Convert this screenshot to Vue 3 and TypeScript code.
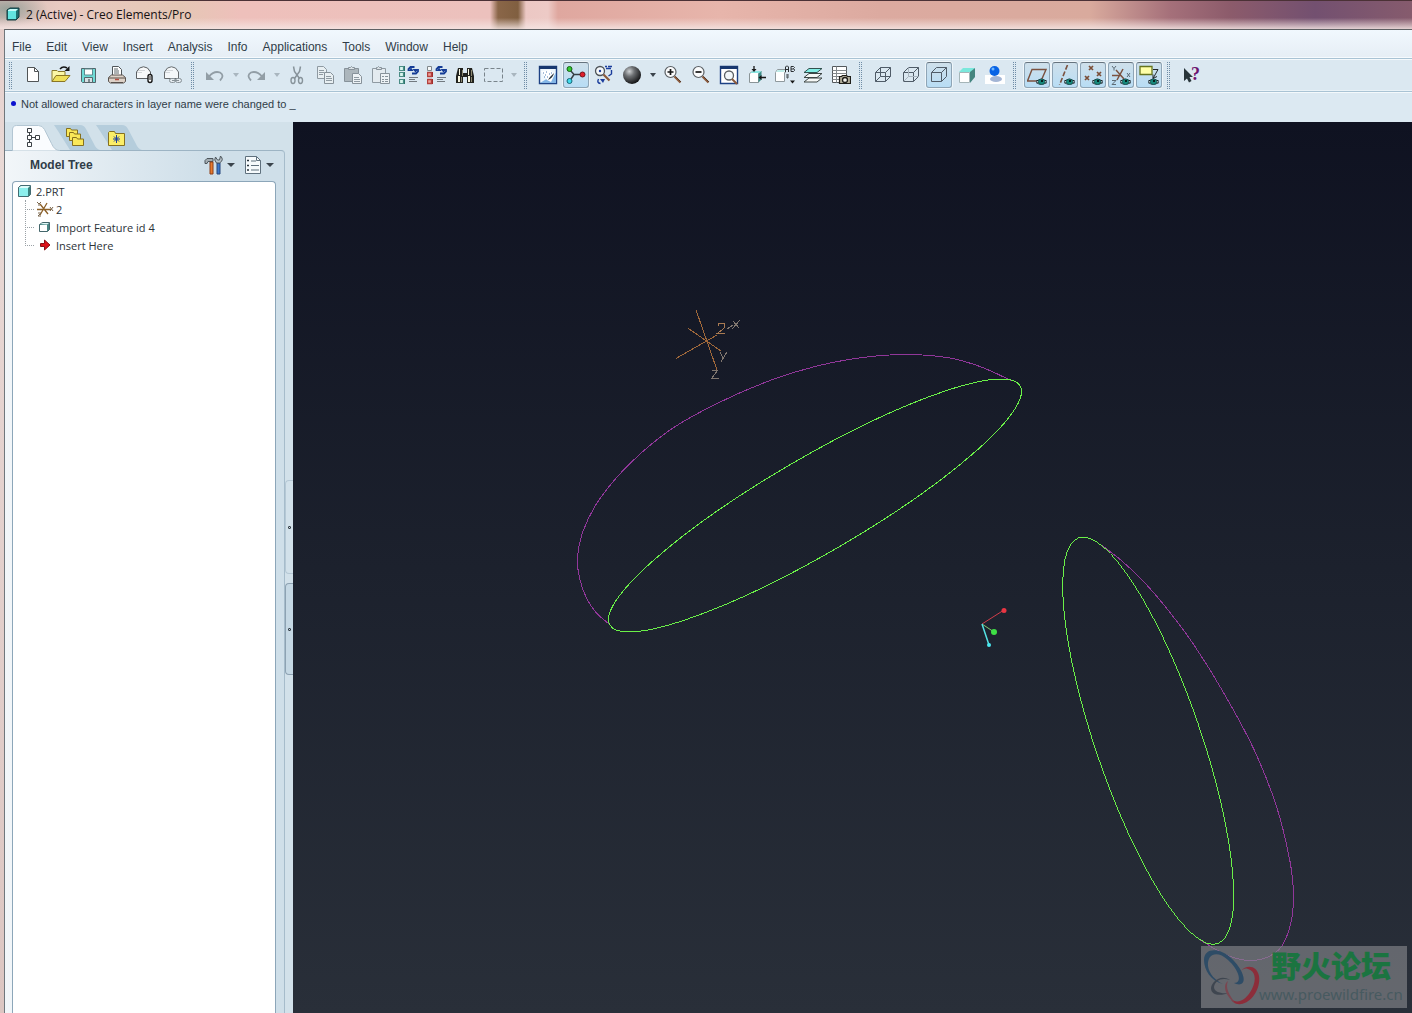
<script setup lang="ts">
interface Tool {
  id: string
  label: string
  active?: boolean
  muted?: boolean
  menu?: boolean
}

type Point = [number, number]

const menus: string[] = ['File', 'Edit', 'View', 'Insert', 'Analysis', 'Info', 'Applications', 'Tools', 'Window', 'Help']

const groups: Tool[][] = [
  [
    { id: 'new', label: 'New' },
    { id: 'open', label: 'Open' },
    { id: 'save', label: 'Save' },
    { id: 'print', label: 'Print' },
    { id: 'mail', label: 'Send as attachment' },
    { id: 'mailLink', label: 'Send as link', muted: true },
  ],
  [
    { id: 'undo', label: 'Undo', muted: true, menu: true },
    { id: 'redo', label: 'Redo', muted: true, menu: true },
    { id: 'cut', label: 'Cut', muted: true },
    { id: 'copy', label: 'Copy', muted: true },
    { id: 'paste', label: 'Paste', muted: true },
    { id: 'pasteSpecial', label: 'Paste special', muted: true },
    { id: 'regen', label: 'Regenerate' },
    { id: 'regenManager', label: 'Regeneration manager' },
    { id: 'find', label: 'Find' },
    { id: 'select', label: 'Select box', muted: true, menu: true },
  ],
  [
    { id: 'repaint', label: 'Repaint' },
    { id: 'spin', label: 'Spin center', active: true },
    { id: 'orient', label: 'Orient mode' },
    { id: 'sphere', label: 'Appearance gallery', menu: true },
    { id: 'zoomIn', label: 'Zoom in' },
    { id: 'zoomOut', label: 'Zoom out' },
    { id: 'refit', label: 'Refit' },
    { id: 'reorient', label: 'Reorient view' },
    { id: 'views', label: 'Saved view list' },
    { id: 'layers', label: 'Layers' },
    { id: 'viewManager', label: 'View manager' },
  ],
  [
    { id: 'wireframe', label: 'Wireframe' },
    { id: 'hiddenLine', label: 'Hidden line' },
    { id: 'noHidden', label: 'No hidden', active: true },
    { id: 'shading', label: 'Shading' },
    { id: 'realism', label: 'Enhanced realism' },
  ],
  [
    { id: 'planes', label: 'Plane display', active: true },
    { id: 'axes', label: 'Axis display', active: true },
    { id: 'points', label: 'Point display', active: true },
    { id: 'csys', label: 'Coordinate system display', active: true },
    { id: 'annotations', label: 'Annotation display', active: true },
  ],
  [{ id: 'help', label: 'Context help' }],
]

const eye =
  '<path d="M9 17q5-6 11 0q-6 5-11 0z" fill="#f4fbff" stroke="#30444c" stroke-width=".8"/><path d="M9.500 15.500h2M17.500 15.500h2M9.500 18h2M17.500 18h2" stroke="#1a2226"/><ellipse cx="14.500" cy="16.800" rx="3.400" ry="2.800" fill="#16887c" stroke="#0d3b3c" stroke-width=".6"/><path d="M14 15h2v2h-2z" fill="#04211f"/>'
const lens = '<path d="M11.500 11.500l6 6" stroke="#8b5a3c" stroke-width="2.200"/><path d="M12.500 11.500l5.500 5.500" stroke="#3d2a1e" stroke-width=".7"/>'
const envelope = '<path d="M1.500 7l3-4q4-2.500 8 0l3 4v6.500h-14z" fill="#f7f9fa" stroke="#5b5f62"/><path d="M2 7.500h5M3 5.500h7" stroke="#c2c6c9" stroke-width=".7"/>'
const cubeOutline = '<path d="M2.500 7.500h10v9h-10zM2.500 7.500l5-5h10l-5 5M17.500 2.500v9l-5 5" fill="none" stroke="#505c68"/>'
const scrollArrows = '<path d="M9.500 6V4l2-2h4M19 4v2.500l-2 2H13" fill="none" stroke="#143c96" stroke-width="1.800"/><path d="M13.500 4h6l-3 3.500zM9.500 6h5l-2.500-3.500z" fill="#143c96"/><path d="M10 12.500h9M10 14.500h6M10 16.500h8" stroke="#727a80"/>'

const icons: Record<string, string> = {
  new: '<path d="M4.500 2.500h7l4 4v10h-11z" fill="#fff" stroke="#505456"/><path d="M11.500 2.500v4h4" fill="none" stroke="#505456"/>',
  open: '<path d="M1 16.500v-11h5l1 1h7v4" fill="#fbf7a6" stroke="#8a7a2c"/><path d="M1 16.500l4-6h14l-5 6z" fill="#eedf59" stroke="#8a7625"/><path d="M9 4q3-3.500 7-1" stroke="#161616" stroke-width="1.500" fill="none"/><path d="M18.500 1v5h-5z" fill="#161616"/>',
  save: '<path d="M2.500 3.500h14v14h-13l-1-1z" fill="#6fdbd6" stroke="#53656b"/><path d="M5.500 4h8v6h-8z" fill="#fff" stroke="#5d8b90"/><path d="M5.500 12.500h8v5h-8z" fill="#d7e0e4" stroke="#56666c"/><path d="M9 14h2v3H9z" fill="#7d8a90"/>',
  print: '<path d="M5.500 10.500v-9h6l3 3v6z" fill="#fff" stroke="#50565a"/><path d="M7 4h4M7 6h5M7 8h5" stroke="#5c666b"/><path d="M1.500 12.500l3-2.500h11l3 2.500v4l-2 1.500h-13l-2-1.500z" fill="#ddd2c8" stroke="#5a534e"/><path d="M2 13h16M4 17.500h12" stroke="#58504b"/><path d="M8 14.500h4" stroke="#b74c40" stroke-width="1.500"/>',
  mail: envelope + '<rect x="13" y="9.500" width="4" height="8" rx="2" fill="#fff" stroke="#161616" stroke-width="1.400"/><path d="M15 11v4" stroke="#161616"/>',
  mailLink: envelope + '<rect x="6.500" y="13.500" width="6" height="4" rx="2" fill="#e5ebef" stroke="#7e888e"/><rect x="12.500" y="13.500" width="6" height="4" rx="2" fill="#e5ebef" stroke="#7e888e"/><path d="M9 15.500h7" stroke="#7e888e"/>',
  undo: '<path d="M4 11.500q5-6 11-4q5 3 0 8" fill="none" stroke="#8b969e" stroke-width="1.800"/><path d="M1 7v8h8z" fill="#8b969e"/>',
  redo: '<path d="M16 11.500q-5-6-11-4q-5 3 0 8" fill="none" stroke="#8b969e" stroke-width="1.800"/><path d="M19 7v8h-8z" fill="#8b969e"/>',
  cut: '<path d="M6.500 1.500l1 5 5 7M13.500 1.500l-1 5-5 7" fill="none" stroke="#7f8a91" stroke-width="1.500"/><ellipse cx="6" cy="15.500" rx="2" ry="3" fill="none" stroke="#7f8a91" stroke-width="1.400"/><ellipse cx="13.500" cy="15.500" rx="2" ry="3" fill="none" stroke="#7f8a91" stroke-width="1.400"/>',
  copy: '<path d="M2.500 1.500h6l3 3v9h-9z" fill="#eaf0f3" stroke="#87929a"/><path d="M4 5.500h5M4 7.500h5M4 9.500h4" stroke="#87929a"/><path d="M9.500 7.500h6l3 3v8h-9z" fill="#eaf0f3" stroke="#7e8991"/><path d="M11 11.500h5M11 13.500h6M11 15.500h6" stroke="#87929a"/>',
  paste: '<path d="M1.500 3.500h14v13h-14z" fill="#a7b1b7" stroke="#7e8991"/><path d="M5.500 4.500v-2h2l1-1 1 1h2v2z" fill="#dbe2e6" stroke="#7e8991"/><path d="M9.500 8.500h6l3 3v7h-9z" fill="#eff4f6" stroke="#7e8991"/><path d="M11 12.500h5M11 14.500h6M11 16.500h6" stroke="#87929a"/>',
  pasteSpecial: '<path d="M1.500 3.500h13v14h-13z" fill="#e5ecf0" stroke="#87929a"/><path d="M5.500 4.500v-2h1l1-1 1 1h2v2z" fill="#dbe2e6" stroke="#7e8991"/><path d="M9.500 8.500h9v10h-9z" fill="#eff4f6" stroke="#7e8991"/><path d="M11 11.500h2M14 11.500h3M11 14.500h2M14 14.500h3M11 16.500h2M14 16.500h3" stroke="#7e8991"/>',
  regen: '<path d="M.5 1.500h4v4h-4zM.5 7.500h4v4h-4zM.5 14.500h4v4h-4z" fill="#d9f5ef" stroke="#4b8d86" stroke-width="1.200"/><path d="M5.500 1v5M5.500 7v5M5.500 14v5" stroke="#2b756d"/>' + scrollArrows,
  regenManager: '<path d="M.5 1.500h4v4h-4z" fill="#f6f8f8" stroke="#80888c"/><path d="M.5 7.500h4v4h-4zM.5 14.500h4v4h-4z" fill="#f0a098" stroke="#b3413e" stroke-width="1.400"/><path d="M5.500 7v5M5.500 14v5" stroke="#a12d2a"/>' + scrollArrows,
  find: '<path d="M3 3h5v5h4V3h5l2 8v7h-7v-6H8v6H1v-7z" fill="#22231f"/><path d="M4 4h1v6H4zM13 4h1v6h-1zM3 11h2v6H3zM13 11h2v6h-2z" fill="#fbf9e4"/><path d="M7 5h1v6H7zM16 5h1v6h-1zM6 12h1v5H6zM16 12h1v5h-1z" fill="#8c8870"/>',
  select: '<rect x="1.500" y="3.500" width="18" height="13" fill="none" stroke="#6f7a81" stroke-dasharray="4 2"/>',
  repaint: '<path d="M1.500 1.500h17v17h-17z" fill="#eef7fd" stroke="#1d4184" stroke-width="1.400"/><path d="M1 1h18v3H1z" fill="#17376f"/><path d="M2 18L18 8v10z" fill="#84b6e6"/><path d="M3 6l9-1 5 4-4 8-4-2z" fill="#fff"/><path d="M5 8h1M7 10h1M9 12h1M11 9h1M8 7h1M13 8h1M6 12h1" stroke="#4d7cb3"/><path d="M16 8q-1 5-6 7l2-3z" fill="#222e37"/>',
  spin: '<path d="M4 5l4 4.500H15M8 9.500l-4 6" fill="none" stroke="#363e45" stroke-width="1.500"/><circle cx="3.500" cy="4" r="2.500" fill="#35cc32" stroke="#165e16"/><circle cx="16.500" cy="9.500" r="2.500" fill="#e01e2c" stroke="#74131b"/><circle cx="3.500" cy="16" r="2.500" fill="#41dced" stroke="#156675"/>',
  orient: '<circle cx="6" cy="6" r="4.500" fill="#f5f8fa" stroke="#4d5358" stroke-width="1.300"/><circle cx="6" cy="6" r="1.200" fill="#1b3d9c"/><path d="M9.500 9.500l6 6" stroke="#8b5a3c" stroke-width="2.200"/><path d="M11 1.500h2M14 1.500h4M12 3.500h5M17.500 5v4l-3 2M4.500 14q-2 4 2 4.500" fill="none" stroke="#1b3d9c" stroke-width="1.400"/><path d="M6 14h5l-2 4z" fill="#1b3d9c"/>',
  sphere: '<defs><radialGradient id="ball" cx=".35" cy=".3" r=".7"><stop offset="0" stop-color="#cfd2d4"/><stop offset=".4" stop-color="#6d7073"/><stop offset="1" stop-color="#17181a"/></radialGradient></defs><circle cx="10" cy="10" r="9" fill="url(#ball)"/>',
  zoomIn: '<circle cx="7.500" cy="7" r="5.500" fill="#fbfcfd" stroke="#5a5f63" stroke-width="1.200"/><path d="M4.500 7h6M7.500 4v6" stroke="#161616" stroke-width="1.700"/>' + lens,
  zoomOut: '<circle cx="7.500" cy="7" r="5.500" fill="#fbfcfd" stroke="#5a5f63" stroke-width="1.200"/><path d="M4.500 7h6" stroke="#161616" stroke-width="1.700"/>' + lens,
  refit: '<path d="M1.500 1.500h17v17h-17z" fill="#fff" stroke="#1d4184" stroke-width="1.400"/><path d="M1 1h18v3H1z" fill="#17376f"/><circle cx="10" cy="10.500" r="4.500" fill="#f2f7fa" stroke="#5a5f63" stroke-width="1.300"/><path d="M13 14l5 5" stroke="#8b5a3c" stroke-width="2"/>',
  reorient: '<path d="M2.500 8.500l3-2h9l-3 2v9h-9z" fill="#fff" stroke="#8a9497"/><path d="M3 8l3-2h9l-3 2z" fill="#8be6e2"/><path d="M11.500 8.500l3-2v8l-3 3z" fill="#3b8a86"/><path d="M7 1v4M19 12.500h-5" stroke="#161616" stroke-width="1.300"/><path d="M4.500 4h5L7 7zM14.500 10v5l-3-2.500z" fill="#161616"/>',
  views: '<path d="M.5 7.500l2-3h8v3l-1 0v9h-9z" fill="#fff" stroke="#8f999d"/><path d="M1 7l2-2h7l-1 2z" fill="#bfeeea"/><path d="M12 9v4h1v-4" stroke="#4a5256" fill="none"/><path d="M10.500 7V2l1-1h1l1 1v5M10.500 4.500h3M16 1.500v5h2.500l1-1v-1l-1-1 1-1v0l-1-1H16M16 4h3" fill="none" stroke="#2a2f33"/><path d="M15 15.500h5l-2.500 3z" fill="#161616"/>',
  layers: '<path d="M1 17l5-4h13l-5 4zM1 12.500l5-4h13l-5 4z" fill="#f6f8f6" stroke="#3e4644"/><path d="M1 7.500l5-4h13l-5 4z" fill="#83eee5" stroke="#33524f"/>',
  viewManager: '<path d="M1.500 1.500h14v16h-14z" fill="#fff" stroke="#54595c"/><path d="M1.500 5.500h14M1.500 8.500h14M1.500 11.500h14M1.500 14.500h14M5.500 1.500v16" stroke="#83898c"/><path d="M8.500 11.500h2l1-1h4l1 1h3v7h-11z" fill="#b3af9c" stroke="#1f1e1a" stroke-width="1.200"/><circle cx="14" cy="15" r="2.500" fill="#f4f4f0" stroke="#1f1e1a" stroke-width="1.300"/>',
  wireframe: cubeOutline + '<path d="M7.500 2.500v9h10M7.500 11.500l-5 5" fill="none" stroke="#505c68"/>',
  hiddenLine: cubeOutline + '<path d="M7.500 2.500v9h10M7.500 11.500l-5 5" fill="none" stroke="#a9b5bf"/>',
  noHidden: cubeOutline,
  shading: '<path d="M2 7l4-4h12l-4 4z" fill="#7be8dc"/><path d="M13 7l5-4v9l-5 6z" fill="#44857f"/><path d="M2.500 7.500h10v10h-10z" fill="#fff" stroke="#a5b5b8"/>',
  realism: '<path d="M0 10h20v9H0z" fill="#fff"/><ellipse cx="11" cy="14" rx="6" ry="3" fill="#a3b5d5"/><circle cx="9.500" cy="6" r="5" fill="#0863e5"/><circle cx="8" cy="4" r="1.500" fill="#71b8ff"/>',
  planes: '<path d="M5 4.500h14l-5 11.500h-13.500z" fill="none" stroke="#7b5240" stroke-width="1.400"/>' + eye,
  axes: '<path d="M12.500 0l-8 20" fill="none" stroke="#7b5240" stroke-width="1.600" stroke-dasharray="5 2"/>' + eye,
  points: '<path d="M6 1l4 4m0-4l-4 4M14 7l4 4m0-4l-4 4M2 11l4 4m0-4l-4 4" stroke="#7b4e37" stroke-width="1.700"/>' + eye,
  csys: '<path d="M1 10.500h9M5 5l8 9M12 4L6 15" stroke="#7b5240" stroke-width="1.500"/><path d="M1 1l2 2.500 2-2.500M3 3.500v2M16 8l3 4m0-4l-3 4M1 15.500h4l-4 4h4" fill="none" stroke="#5d6b75"/>' + eye,
  annotations: '<path d="M1 1.500h12v8h-12z" fill="#ffffa8" stroke="#66741e" stroke-width="1.300"/><path d="M14 4.500h5l-5 9M14 9.500v4l4-2" fill="none" stroke="#25292c"/>' + eye,
  help: '<path d="M3 3v13l3-2.500 2 4 2.500-1.500-2-4h3.500z" fill="#28353a"/>',
}

// Catmull-Rom spline through the sampled curve points, as cubic segments.
function smooth(points: Point[]): string {
  let d = `M${points[0][0]} ${points[0][1]}`
  for (let i = 0; i < points.length - 1; i++) {
    const a = points[Math.max(i - 1, 0)]
    const b = points[i]
    const c = points[i + 1]
    const e = points[Math.min(i + 2, points.length - 1)]
    d += `C${b[0] + (c[0] - a[0]) / 6} ${b[1] + (c[1] - a[1]) / 6} ${c[0] - (e[0] - b[0]) / 6} ${c[1] - (e[1] - b[1]) / 6} ${c[0]} ${c[1]}`
  }
  return d
}

const curves: Point[][] = [
  [[1011.5, 380.7], [980, 366.5], [947, 357.5], [905, 354.5], [863, 357.5], [817, 366], [770, 380.5], [717, 403.5], [670, 430], [630, 463.5], [600, 498.5], [583.5, 530], [577.5, 558], [580, 580], [587, 599], [596.5, 613], [609, 624]],
  [[1100, 544], [1122, 561], [1144, 582], [1168, 610], [1194, 645], [1223.5, 692.5], [1253.5, 748.5], [1276.5, 806.5], [1290, 861.5], [1293.5, 896.5], [1290, 926.5], [1278.5, 950], [1253.5, 960.5], [1226.5, 955], [1198, 938.5]],
]
</script>

<template>
  <div class="window">
    <header class="titlebar">
      <svg class="app-icon" width="14" height="14" viewBox="0 0 14 14" aria-hidden="true">
        <path d="M1 3l3-2h9v9l-3 3H1z" fill="#1d6f70" stroke="#163c40" />
        <path d="M2 4h8v8H2z" fill="#62e4e0" />
        <path d="M2 3l2-1h8l-2 2H2z" fill="#c5fbf8" />
      </svg>
      <span>2 (Active) - Creo Elements/Pro</span>
    </header>

    <div class="frame">
      <nav class="menubar" aria-label="Main menu">
        <button v-for="m in menus" :key="m" type="button">{{ m }}</button>
      </nav>

      <div class="toolbar" role="toolbar" aria-label="Tools">
        <div v-for="(group, g) in groups" :key="g" class="group">
          <i class="grip"></i>
          <template v-for="tool in group" :key="tool.id">
            <button type="button" class="tool" :class="{ active: tool.active }" :aria-label="tool.label">
              <svg width="20" height="20" viewBox="0 0 20 20" :class="{ muted: tool.muted }" v-html="icons[tool.id]"></svg>
              <b v-if="tool.id === 'help'" class="question">?</b>
            </button>
            <button v-if="tool.menu" type="button" class="drop" :class="{ faded: tool.muted }" :aria-label="tool.label + ' options'"></button>
          </template>
        </div>
      </div>

      <p class="message" role="status"><i class="bullet"></i>Not allowed characters in layer name were changed to _</p>

      <main class="work">
        <aside class="side">
          <div class="tabs" role="tablist">
            <button type="button" class="tab on" role="tab" aria-selected="true" aria-label="Model Tree">
              <svg class="shape" width="50" height="26" viewBox="0 0 50 26"><path d="M.5 26V5q0-4.500 4-4.500h22q4 0 6 4l7 14q3 7 8 7V26z" fill="#fafcfe" stroke="#b3c6d3" /></svg>
              <svg class="glyph" width="20" height="20" viewBox="0 0 20 20"><path d="M5.500 1.500h4v4h-4zM5.500 8.500h4v4h-4zM5.500 15.500h4v4h-4zM13.500 8.500h4v4h-4z" fill="#fff" stroke="#3b4146" /><path d="M7.500 6v2M7.500 13v2M10 10.500h3" stroke="#3b4146" /></svg>
            </button>
            <button type="button" class="tab" role="tab" aria-selected="false" aria-label="Folder Browser">
              <svg class="shape" width="50" height="26" viewBox="0 0 50 26"><path d="M0 0h26q4 0 6 4l8 15q2 5 6 6H16L4 6z" fill="#b5cddc" /></svg>
              <svg class="glyph" width="20" height="20" viewBox="0 0 20 20"><g fill="#fae858" stroke="#85701f"><path d="M2.500 9.500v-8h4l1 1.500h6v6.500z" /><path d="M5.500 13.500v-8h4l1 1.500h6v6.500z" /><path d="M8.500 18.500v-8h4l1 1.500h6v6.500z" /></g></svg>
            </button>
            <button type="button" class="tab" role="tab" aria-selected="false" aria-label="Favorites">
              <svg class="shape" width="50" height="26" viewBox="0 0 50 26"><path d="M0 0h26q4 0 6 4l8 15q2 5 6 6H16L4 6z" fill="#b5cddc" /></svg>
              <svg class="glyph" width="20" height="20" viewBox="0 0 20 20"><path d="M2.500 18.500V5.500l1-1h5l1 2h9v12z" fill="#fbee68" stroke="#85701f" /><path d="M10.500 8v8M7 12h7M8 9.500l5 5M13 9.500l-5 5" stroke="#1b3d9c" /></svg>
            </button>
          </div>

          <section class="panel">
            <div class="panel-head">
              <h1>Model Tree</h1>
              <button type="button" class="setting" aria-label="Settings">
                <svg width="20" height="20" viewBox="0 0 20 20"><path d="M1 5.500l2-2h6v3H4l-1 2H1z" fill="#a3adb3" stroke="#4d565c" /><path d="M6 7h3v12H6z" fill="#e77b2f" stroke="#8c3f19" /><path d="M13 8h3v11h-3z" fill="#3b78cd" stroke="#27477d" /><path d="M12.500 8q-3-3-1-6l2 3 2 0 1-4q4 4-1 7z" fill="#bac4ca" stroke="#4d565c" /></svg>
                <i class="caret"></i>
              </button>
              <button type="button" class="setting" aria-label="Show">
                <svg width="20" height="20" viewBox="0 0 20 20"><path d="M2.500 1.500h11l4 4v13h-15z" fill="#f6fafc" stroke="#5f707d" /><path d="M13.500 1.500v4h4M8 6h5M8 10.500h8M8 15h8" fill="none" stroke="#5f707d" /><path d="M4.500 5h1v1h-1zM4.500 10h1v1h-1zM4.500 14.500h1v1h-1z" fill="none" stroke="#27323a" /></svg>
                <i class="caret"></i>
              </button>
            </div>
            <ul class="tree">
              <li>
                <div class="row">
                  <svg width="14" height="14" viewBox="0 0 14 14"><path d="M.5 3.500l2-2h10v9l-2 2H.5z" fill="#39827f" stroke="#436b72" /><path d="M1 4h9v8H1z" fill="#8defed" /><path d="M1 3.500L3 2h9l-2 2H1z" fill="#dffdfb" /></svg>
                  <span>2.PRT</span>
                </div>
                <ul class="children">
                  <li class="row">
                    <svg width="18" height="16" viewBox="0 0 18 16"><path d="M1 8.500h14M4 3l8 10M11 2L4 14" stroke="#8c6028" stroke-width="1.300" /><path d="M1 1l2 2 2-2M3 3v2M14 6l3 4m0-4l-3 4M2 12h3l-3 3h3" fill="none" stroke="#7a664d" /></svg>
                    <span>2</span>
                  </li>
                  <li class="row">
                    <svg width="18" height="16" viewBox="0 0 18 16"><path d="M3.500 5.500l3-2h7v7l-2 2h-8z" fill="#498684" stroke="#44666b" /><path d="M4 6h7v6H4z" fill="#fff" /><path d="M4 5l3-1h6l-2 1.500z" fill="#e0f8f7" /></svg>
                    <span>Import Feature id 4</span>
                  </li>
                  <li class="row">
                    <svg width="18" height="16" viewBox="0 0 18 16"><path d="M4.500 6.500h4v-3.500l5.500 5-5.500 5V9.500h-4z" fill="#dd1019" stroke="#8a1016" /></svg>
                    <span>Insert Here</span>
                  </li>
                </ul>
              </li>
            </ul>
          </section>
        </aside>

        <div class="gutter">
          <button type="button" class="sash faint" aria-label="Toggle browser"></button>
          <button type="button" class="sash" aria-label="Toggle navigator"></button>
        </div>

        <section class="canvas" aria-label="Graphics area">
          <svg class="scene" viewBox="0 0 1119 891" preserveAspectRatio="xMinYMin slice">
            <g transform="translate(-293 -122)" fill="none" shape-rendering="crispEdges">
              <path v-for="(c, i) in curves" :key="i" :d="smooth(c)" stroke="#91379a" />
              <ellipse cx="815" cy="505.500" rx="237.400" ry="47.800" transform="rotate(-30.240 815 505.500)" stroke="#6af048" />
              <ellipse cx="1148.200" cy="740.700" rx="52.700" ry="214.500" transform="rotate(-18.900 1148.200 740.700)" stroke="#6af048" />
              <path d="M676 358.500L717 335M688.500 328.500L721 351M696 310L717 370" stroke="#a0683a" />
              <path d="M727 329l6-4M733 321l6 7M740 320l-8 9" stroke="#80776f" />
              <path d="M718 326q0-3 3.500-3t3.500 3q0 2-3 4l-4 3h7" stroke="#a87a52" />
              <path d="M720 352l3 6M727 352l-6 10M712 370h6l-6 8h7" stroke="#80776f" />
            </g>
            <g transform="translate(-293 -122)" fill="none">
              <path d="M982 624l22-14" stroke="#cf3d49" />
              <path d="M982 624l12 8" stroke="#7fca70" />
              <path d="M982 624l7 21" stroke="#55e2e4" stroke-width="1.500" />
              <circle cx="1004" cy="610.500" r="2.500" fill="#e93542" />
              <circle cx="994" cy="632" r="3" fill="#3ee045" />
              <circle cx="989" cy="645" r="2" fill="#4ae8ef" />
            </g>
          </svg>
          <div class="watermark">
            <svg width="60" height="62" viewBox="0 0 60 62" aria-hidden="true">
              <path fill-rule="evenodd" d="M3 14C3 2 18 1 30 12C42 23 46 36 40 38C38 39 35 38 33 37C42 37 38 24 27 14C16 4 6 8 7 20C8 28 15 35 22 38C10 35 3 24 3 14z" fill="#2e4c66" />
              <path fill-rule="evenodd" d="M40 25C46 18 56 20 58 30C60 43 50 57 40 58C35 59 31 56 30 53C37 59 46 53 51 43C56 33 54 25 47 23C44 22 42 23 40 25z" fill="#8c2d3a" />
              <path d="M29 34C20 28 11 35 10 42C10 50 20 50 28 47C20 48 13 46 13 41C14 35 20 31 29 34z" fill="#3f4650" />
              <path d="M27 35C22 38 23 49 34 57C28 48 24 42 27 35z" fill="#7a4650" />
            </svg>
            <div class="words">
              <strong>野火论坛</strong>
              <span>www.proewildfire.cn</span>
            </div>
          </div>
        </section>
      </main>
    </div>
  </div>
</template>

<style>
body {
  margin: 0;
}
</style>

<style scoped>
.window {
  box-sizing: border-box;
  min-height: 100vh;
  display: flex;
  flex-direction: column;
  overflow: hidden;
  background: linear-gradient(#e3cbc8, #e9d9d6 150px, #dcc6c2);
  font-family: "Liberation Sans", Arial, sans-serif;
  color: #303d48;
}
button {
  border: 0;
  padding: 0;
  background: none;
  font: inherit;
  color: inherit;
}
svg {
  display: block;
  flex: none;
}
.titlebar {
  box-sizing: border-box;
  height: 29px;
  flex: none;
  display: flex;
  align-items: center;
  gap: 6px;
  padding: 0 0 2px 6px;
  border-top: 1px solid #4b3136;
  background:
    linear-gradient(transparent 60%, rgba(245, 230, 228, 0.85)),
    radial-gradient(ellipse 40px 18px at 8px 8px, rgba(125, 150, 140, 0.7), transparent),
    linear-gradient(90deg, #d9bcb8 0, #e8cac2 60px, #e5c7b5 180px, #eec0bb 240px, #ecc1bd 490px, #8a6648 498px, #805f40 518px, #ecc8c4 526px, #edcac6 548px, #dfa79f 558px, #e7b5ab 720px, #dcaaa0 880px, #d9aa9d 1090px, #a5707a 1170px, #8c5b6b 1230px, #735070 1315px, #865b6d 100%);
  font: 12px "Open Sans", "Noto Sans", sans-serif;
  color: #161214;
  white-space: nowrap;
}
.frame {
  flex: 1;
  display: flex;
  flex-direction: column;
  margin-left: 4px;
  border-top: 1px solid #5f6164;
  border-left: 1px solid #70777c;
  background: #dce9f2;
}
.menubar {
  height: 28px;
  display: flex;
  align-items: center;
  gap: 15px;
  padding: 6px 7px 0;
  box-sizing: border-box;
  background: linear-gradient(#f1f8fe, #e6eef5);
  border-bottom: 1px solid #f6fafd;
  font-size: 12px;
}
.toolbar {
  height: 34px;
  box-sizing: border-box;
  display: flex;
  align-items: center;
  gap: 4px;
  padding-left: 4px;
  border-top: 1px solid #a9c3d4;
  border-bottom: 1px solid #a9c3d4;
  box-shadow: inset 0 1px #f4f9fc, inset 0 -1px #e9f2f7;
  background: #dbe8f1;
}
.group {
  display: flex;
  align-items: center;
}
.grip {
  width: 3px;
  height: 27px;
  margin-right: 7px;
  background: repeating-linear-gradient(#6f8ca6 0 1px, transparent 1px 2px) 0 0 / 1px 100% no-repeat,
    repeating-linear-gradient(#6f8ca6 0 1px, transparent 1px 2px) 2px 0 / 1px 100% no-repeat;
}
.tool {
  position: relative;
  box-sizing: border-box;
  width: 26px;
  height: 26px;
  margin: 0 1px;
  display: flex;
  align-items: center;
  justify-content: center;
  border-radius: 3px;
}
.tool.active {
  border: 1px solid #8fa5b6;
  border-top-color: #66737e;
  background: linear-gradient(#cfe0eb, #b8ddf5);
  box-shadow: 0 0 0 1px #eff6fa;
}
.muted {
  opacity: 0.9;
}
.question {
  position: absolute;
  left: 13px;
  top: 2px;
  font: bold 18px/20px "Liberation Serif", serif;
  color: #6d1470;
}
.drop {
  width: 13px;
  height: 26px;
  display: flex;
  align-items: center;
  justify-content: center;
}
.drop::before,
.caret {
  content: "";
  border: 3px solid transparent;
  border-top: 4px solid #3b444c;
  border-bottom: 0;
}
.drop.faded::before {
  border-top-color: #a9b6bf;
}
.message {
  height: 30px;
  box-sizing: border-box;
  margin: 0;
  display: flex;
  align-items: center;
  gap: 5px;
  padding: 0 6px 8px;
  border-top: 1px solid #f4f9fc;
  font-size: 11px;
}
.bullet {
  width: 5px;
  height: 5px;
  border-radius: 50%;
  background: #0b12cf;
}
.work {
  flex: 1;
  display: flex;
}
.side {
  width: 280px;
  flex: none;
  display: flex;
  flex-direction: column;
  background: #d2e1ea;
}
.tabs {
  height: 28px;
  box-sizing: border-box;
  padding: 3px 0 0 7px;
  display: flex;
}
.tab {
  position: relative;
  width: 42px;
  height: 26px;
  display: flex;
  align-items: flex-start;
}
.tab.on {
  z-index: 1;
}
.shape {
  position: absolute;
  left: 0;
  top: 0;
}
.glyph {
  position: relative;
  margin: 2px 0 0 10px;
}
.panel {
  flex: 1;
  display: flex;
  flex-direction: column;
  padding: 0 8px 0 7px;
  border-top: 1px solid #9db4c4;
  border-right: 1px solid #a6bccb;
  border-top-right-radius: 4px;
  background: linear-gradient(90deg, #f2f6f9, #cfdfe9 200px);
}
.panel-head {
  height: 30px;
  box-sizing: border-box;
  display: flex;
  align-items: center;
  gap: 8px;
  padding: 0 2px 2px 18px;
}
h1 {
  flex: 1;
  margin: 0;
  font-size: 12px;
  font-weight: bold;
}
.setting {
  display: flex;
  align-items: center;
  gap: 3px;
}
.caret {
  border-width: 4px 4px 0;
}
ul {
  margin: 0;
  padding: 0;
  list-style: none;
}
.tree {
  flex: 1;
  padding: 0 5px;
  border: 1px solid #8ca6b9;
  border-bottom: 0;
  border-radius: 4px 4px 0 0;
  background: #fff;
  font: 11px "Open Sans", "Noto Sans", sans-serif;
  color: #2c3338;
}
.row {
  height: 18px;
  display: flex;
  align-items: center;
  gap: 4px;
}
.children {
  margin-left: 7px;
}
.children .row {
  gap: 2px;
}
.children .row::before {
  content: "";
  align-self: flex-start;
  width: 8px;
  height: 9px;
  border-left: 1px dotted #9aa1a6;
  border-bottom: 1px dotted #9aa1a6;
}
.children .row + .row::before {
  height: 18px;
  margin-top: -9px;
}
.gutter {
  width: 8px;
  flex: none;
  display: flex;
  flex-direction: column;
  gap: 9px;
  padding-top: 358px;
  background: #d2e1ea;
}
.sash {
  box-sizing: border-box;
  width: 8px;
  height: 92px;
  display: flex;
  align-items: center;
  justify-content: center;
  border: 1px solid #8da2b2;
  border-right: 0;
  border-radius: 4px 0 0 4px;
  background: #c5d8e4;
}
.sash::before {
  content: "";
  width: 1px;
  height: 1px;
  border: 1px solid #333d45;
  border-radius: 1px;
}
.sash.faint {
  height: 94px;
  border-color: #b5c8d5;
  background: #d2e1ea;
}
.canvas {
  flex: 1;
  position: relative;
  min-width: 0;
  overflow: hidden;
  background: linear-gradient(#0f1221, #1c212d 50%, #292f39);
}
.scene {
  width: 100%;
  height: 100%;
}
.watermark {
  position: absolute;
  right: 5px;
  bottom: 5px;
  width: 206px;
  height: 62px;
  display: flex;
  background: rgba(132, 134, 138, 0.65);
}
.words {
  display: flex;
  flex-direction: column;
  align-items: center;
  margin-left: -2px;
}
.words strong {
  font: 900 30px/42px "Liberation Sans", "Noto Sans CJK SC", sans-serif;
  color: #1b7440;
}
.words span {
  font: 15px/12px "Noto Sans", sans-serif;
  color: #475a60;
}
</style>
